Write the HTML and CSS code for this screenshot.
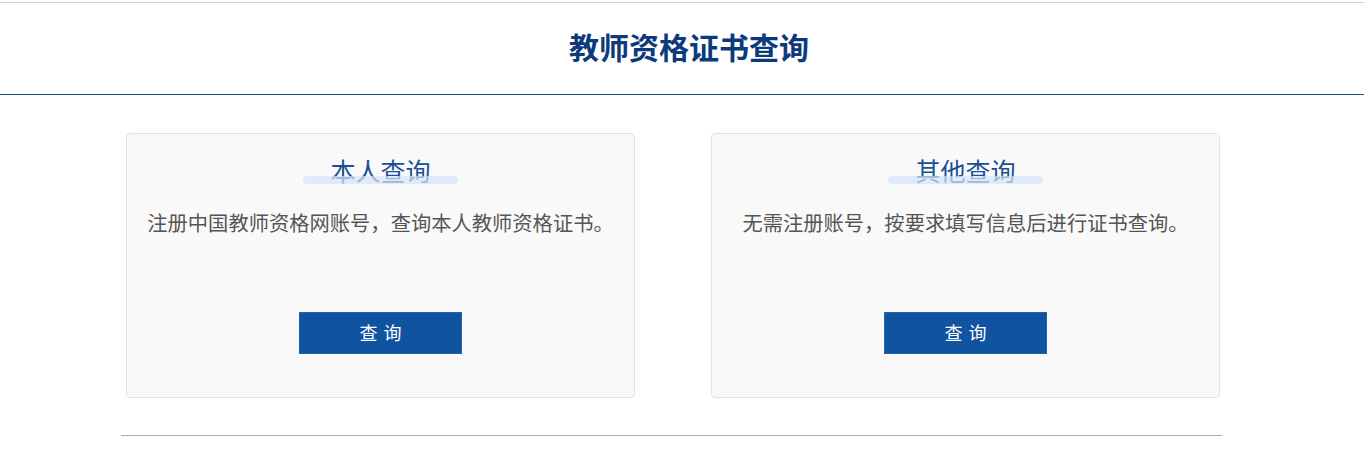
FILE: index.html
```html
<!DOCTYPE html>
<html>
<head>
    <title>教师资格证书查询</title>
    <meta name="viewport" content="width=device-width, initial-scale=1.0">
    <link rel="stylesheet" href="styles.css">
</head>
<body>
    <div class="header">
        <h1>教师资格证书查询</h1>
    </div>

    <div class="main">
        <div class="cards">
            <div class="card">
                <h2 class="card-title">本人查询</h2>
                <p class="card-desc">注册中国教师资格网账号，查询本人教师资格证书。</p>
                <button class="btn">查询</button>
            </div>
            <div class="card">
                <h2 class="card-title">其他查询</h2>
                <p class="card-desc">无需注册账号，按要求填写信息后进行证书查询。</p>
                <button class="btn">查询</button>
            </div>
        </div>
        <div class="bottom-line"></div>
    </div>
</body>
</html>
```

FILE: styles.css
```css
* {
    margin: 0;
    padding: 0;
    box-sizing: border-box;
}

body {
    font-family: "Microsoft YaHei", "Noto Sans CJK SC", sans-serif;
    color: #555;
    background: #fff;
    padding-top: 2px;
}

.header {
    height: 93px;
    border-top: 1px solid #c9d1df;
    border-bottom: 1px solid #1b4c8c;
    display: flex;
    align-items: center;
    justify-content: center;
}

.header h1 {
    font-size: 30px;
    font-weight: bold;
    color: #0c3a7c;
    line-height: 40px;
    margin-left: 14px;
    margin-top: -6px;
}

.main {
    width: 1101px;
    margin-left: 121px;
    padding-top: 38px;
}

.cards {
    display: flex;
    justify-content: space-between;
    padding: 0 2px 0 5px;
}

.card {
    width: 509px;
    height: 265px;
    background-color: #f9f9f9;
    border: 1px solid #e2e2e2;
    border-radius: 4px;
    display: flex;
    flex-direction: column;
    align-items: center;
    padding: 20px 6px 43px;
}

.card-title {
    position: relative;
    font-size: 25px;
    font-weight: normal;
    color: #1a4e9a;
    line-height: 32px;
}

/* faixa clara sobre a base do título */
.card-title::after {
    content: "";
    position: absolute;
    left: 50%;
    bottom: 2px;
    width: 155px;
    height: 8px;
    margin-left: -77px;
    border-radius: 4px;
    background: rgba(214, 228, 248, 0.7);
}

.card-desc {
    margin-top: 21px;
    font-size: 20.3px;
    line-height: 30px;
    color: #555;
    text-align: center;
    white-space: nowrap;
}

.btn {
    margin-top: auto;
    width: 163px;
    height: 42px;
    padding-bottom: 3px;
    background-color: #1053a1;
    border: 1px solid #2563a9;
    color: #fff;
    font-family: inherit;
    font-size: 18px;
    letter-spacing: 6px;
    text-indent: 6px;
    cursor: pointer;
}

.bottom-line {
    margin-top: 37px;
    height: 1px;
    background: #a4acba;
}
```
